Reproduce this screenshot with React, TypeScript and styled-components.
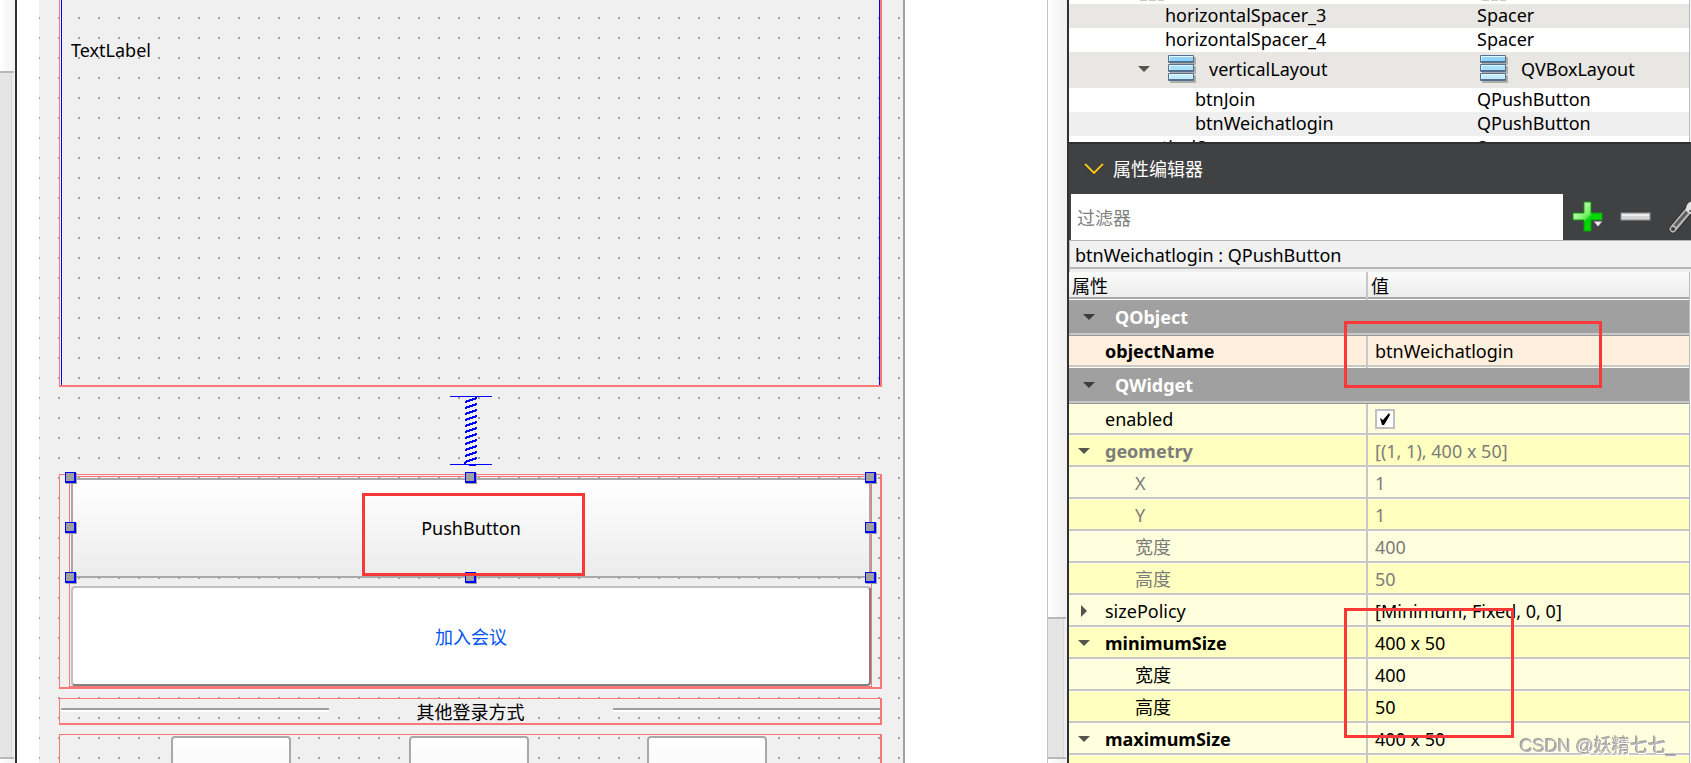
import React from 'react';
import styled, { createGlobalStyle, css } from 'styled-components';

const GlobalStyle = createGlobalStyle`
  * { box-sizing: border-box; }
  body {
    margin: 0;
    background: #ffffff;
    color: #000000;
    font: 18px/24px 'Noto Sans', 'Noto Sans CJK SC', sans-serif;
  }
  button, input { font: inherit; color: inherit; }
`;

const frameRed = '#f87878';
const markRed = '#fb3838';
const dark = '#2f3032';
const dockGrey = '#404142';

const Workspace = styled.div`
  display: flex;
  height: 100vh;
  overflow: hidden;
`;

/* ---------- scroll bars ---------- */

const ScrollTrack = styled.div<{ $width: number; $edge?: boolean }>`
  display: flex;
  flex-direction: column;
  flex: none;
  width: ${(p) => p.$width}px;
  border-left: ${(p) => (p.$edge ? '1px solid #c4c4c4' : '0')};
  background: linear-gradient(to right, #ffffff, #f0f0f0);
`;

const ScrollSpace = styled.div<{ $grow: number }>`
  flex: ${(p) => p.$grow} 1 0;
`;

const ScrollHandle = styled.div<{ $grow: number }>`
  flex: ${(p) => p.$grow} 1 0;
  margin-right: 1px;
  border: solid #b8b8b8;
  border-width: 2px 0;
  background: #e5e5e5;
  box-shadow: inset -2px 0 #ececec, inset -3px 0 #d8d8d8;
`;

const ScrollEnd = styled.div`
  flex: none;
  height: 4px;
`;

/* ---------- form canvas ---------- */

const Canvas = styled.main`
  display: flex;
  flex: 1;
  min-width: 0;
  padding: 0 142px 0 22px;
  border-left: 2px solid ${dark};
`;

const Form = styled.form`
  display: flex;
  flex: 1;
  flex-direction: column;
  gap: 9px;
  min-width: 0;
  padding: 0 21px 0 20px;
  overflow: hidden;
  border-right: 2px solid #a0a0a0;
  background: conic-gradient(at 2px 2px, transparent 75%, #a0a0a0 0) -1px -3px / 20px 20px #f0f0f0;
`;

const LayoutFrame = styled.div`
  flex: none;
  border: solid ${frameRed};
  border-width: 1px 2px 2px 1px;
`;

const LabelFrame = styled(LayoutFrame)`
  height: 387px;
  padding-left: 1px;
  border-top: 0;
`;

const Label = styled.div`
  height: 100%;
  padding: 38px 9px;
  border: solid #0000ff;
  border-width: 0 1px;
`;

const SpacerDrawing = styled.svg`
  flex: none;
  align-self: center;
  overflow: visible;
`;

const ButtonsFrame = styled(LayoutFrame)`
  padding: 1px 8px 0 9px;
`;

const InnerFrame = styled.div`
  display: flex;
  flex-direction: column;
  gap: 8px;
  padding: 1px 0 0 1px;
  border: 1px solid ${frameRed};
`;

const Selection = styled.div`
  position: relative;
  display: grid;
  height: 100px;
`;

const PushButton = styled.button`
  padding: 0;
  border: 2px solid #a8a8a8;
  border-radius: 4px;
  background: linear-gradient(#ffffff, #ececec);
`;

const JoinButton = styled.button`
  height: 100px;
  padding: 2px 0 0;
  border: 2px solid;
  border-color: #c0c0c0 #808080 #808080 #c0c0c0;
  border-radius: 4px;
  background: #ffffff;
  color: #0055ee;
`;

const Handle = styled.span<{ $x: number; $y: number }>`
  position: absolute;
  left: calc(${(p) => p.$x}% - 6px);
  top: calc(${(p) => p.$y}% - 6px);
  width: 11px;
  height: 11px;
  border: solid #0000ff;
  border-width: 1px 2px 2px 1px;
  background: #a0a0a0;
  box-shadow: 1px 1px #a0a0a0;
`;

const mark = css`
  position: absolute;
  border: 3px solid ${markRed};
  pointer-events: none;
`;

const ButtonMark = styled.span`
  ${mark}
  left: calc(50% - 109px);
  top: 15px;
  width: 223px;
  height: 83px;
`;

const DividerFrame = styled(LayoutFrame)`
  display: grid;
  grid-template-columns: 1fr 284px 1fr;
  padding-left: 1px;
  text-align: center;
`;

const Rule = styled.hr`
  width: 100%;
  height: 4px;
  margin: 9px 0 0;
  border: solid;
  border-width: 2px 0;
  border-color: #a0a0a0 transparent #ffffff;
`;

const DividerText = styled.span`
  height: 24px;
  line-height: 26px;
`;

const IconButtonsFrame = styled(LayoutFrame)`
  display: flex;
  justify-content: center;
  gap: 118px;
  padding: 1px 2px 0 0;
`;

const IconButton = styled(PushButton)`
  width: 120px;
  height: 100px;
`;

/* ---------- dock ---------- */

const Dock = styled.aside`
  display: flex;
  flex: none;
  flex-direction: column;
  width: 624px;
  border-left: 2px solid ${dark};
`;

const Scrolled = styled.div<{ $height?: number }>`
  position: relative;
  flex: ${(p) => (p.$height ? 'none' : '1')};
  height: ${(p) => (p.$height ? `${p.$height}px` : 'auto')};
  min-height: 0;
  overflow: hidden;
  border-right: 1px solid #f4f4f4;
  box-shadow: inset -1px 0 #bdbdbd;
`;

const ObjectTable = styled.table`
  width: calc(100% - 1px);
  table-layout: fixed;
  border-collapse: collapse;
`;

const ObjectRow = styled.tr<{ $tone: string; $height: number }>`
  height: ${(p) => p.$height}px;
  background: ${(p) => p.$tone};
`;

const ObjectCell = styled.td<{ $indent: number }>`
  padding: 0 0 0 ${(p) => p.$indent}px;
  line-height: 22px;
  white-space: nowrap;
  vertical-align: top;
`;

const IconTail = styled.div`
  width: 24px;
  height: 1px;
  background: repeating-linear-gradient(to right, #c8c8c8 0 7px, #ffffff 7px 9px);
`;

const Branch = styled.div<{ $gap: number }>`
  display: flex;
  align-items: center;
  gap: ${(p) => p.$gap}px;
`;

const LayoutBranch = styled(Branch)`
  height: 34px;
`;

const Disclosure = styled.button`
  display: grid;
  place-items: center;
  width: 16px;
  height: 16px;
  padding: 0;
  border: 0;
  background: none;
`;

const DockTitle = styled.h2`
  display: flex;
  flex: none;
  align-items: center;
  gap: 9px;
  height: 52px;
  margin: 0;
  padding-left: 15px;
  border-top: 2px solid ${dark};
  background: ${dockGrey};
  color: #ffffff;
  font-size: 18px;
  font-weight: 400;
`;

const FilterBar = styled.div`
  display: flex;
  flex: none;
  height: 46px;
  padding-left: 2px;
  overflow: hidden;
  background: ${dockGrey};
`;

const FilterInput = styled.input`
  flex: 1;
  min-width: 0;
  padding: 1px 6px 0;
  border: 0;
  border-radius: 0;
  background: #ffffff;
  &::placeholder { color: #808080; opacity: 1; }
`;

const Tools = styled.div`
  display: flex;
  flex: none;
  gap: 16px;
  width: 128px;
  padding: 6px 0 0 9px;
  overflow: hidden;
`;

const ToolButton = styled.button`
  display: grid;
  flex: none;
  place-items: center;
  width: 32px;
  height: 32px;
  padding: 0;
  border: 0;
  background: none;
`;

const ObjectTitle = styled.div`
  flex: none;
  height: 32px;
  padding: 2px 5px 0;
  border: solid #b4b4b4;
  border-width: 1px 0 0 1px;
  background: linear-gradient(to top, #f0f0f0 3px, #b8b8b8 3px 5px, #f1f1f1 5px);
`;

const PropertyTable = styled.table`
  width: calc(100% - 1px);
  table-layout: fixed;
  border-collapse: separate;
  border-spacing: 0;
`;

const HeadCell = styled.th`
  height: 28px;
  padding: 0 3px 1px;
  background: linear-gradient(to top, #ffffff 1px, #a8a8a8 1px 3px, #ececec 3px, #fbfbfb);
  font-weight: 400;
  text-align: left;
  &:first-child { border-right: 2px solid #c8c8c8; }
`;

const GroupCell = styled.th`
  height: 36px;
  padding: 0 0 3px 12px;
  background: linear-gradient(to top, #989898 1px, #c8c8c8 1px 3px, #a0a0a0 3px);
  color: #ffffff;
  font-weight: 700;
  text-align: left;
`;

type Shade = 'peach' | 'pale' | 'deep';
const shades: Record<Shade, string> = { peach: '#fff0de', pale: '#ffffdd', deep: '#ffffbf' };

const PropertyRow = styled.tr<{ $shade: Shade; $muted?: boolean }>`
  color: ${(p) => (p.$muted ? '#7c7c7c' : '#000000')};
  background: linear-gradient(to top, #ffffee 1px, #c8c8c8 1px 3px, ${(p) => shades[p.$shade]} 3px);
`;

const NameCell = styled.th<{ $bold?: boolean; $indent: number }>`
  height: 32px;
  padding: 0 0 3px ${(p) => p.$indent}px;
  border-right: 2px solid #c8c8c8;
  font-weight: ${(p) => (p.$bold ? 700 : 400)};
  text-align: left;
  white-space: nowrap;
`;

const ValueCell = styled.td`
  padding: 0 0 3px 7px;
  white-space: nowrap;
`;

const CheckBox = styled.label`
  display: grid;
  width: 20px;
  height: 20px;
  > * { grid-area: 1 / 1; margin: 0; }
  > svg { pointer-events: none; }
`;

const CheckInput = styled.input`
  appearance: none;
  width: 20px;
  height: 20px;
  border: 2px solid #c0c0c0;
  background: #ffffff;
`;

const NameMark = styled.div`
  ${mark}
  left: 275px;
  top: 49px;
  width: 258px;
  height: 67px;
`;

const SizeMark = styled.div`
  ${mark}
  left: 275px;
  top: 336px;
  width: 170px;
  height: 130px;
`;

const Watermark = styled.div`
  position: fixed;
  right: 15px;
  bottom: 5px;
  color: #b4b4b0;
  font: 18px/24px 'Liberation Sans', 'Noto Sans CJK SC', sans-serif;
  text-shadow: 1px 1px #ffffff, -1px -1px #9c9c94;
`;

/* ---------- drawings ---------- */

const DownArrow = ({ fill = '#55554d' }: { fill?: string }) => (
  <svg width="12" height="6" viewBox="0 0 12 6" aria-hidden="true">
    <path d="M0 0H12L6 6Z" fill={fill} />
  </svg>
);

const RightArrow = () => (
  <svg width="6" height="12" viewBox="0 0 6 12" aria-hidden="true">
    <path d="M0 0V12L6 6Z" fill="#55554d" />
  </svg>
);

const LayoutIcon = () => (
  <svg width="28" height="28" viewBox="0 0 28 28" aria-hidden="true">
    {['#8fd4f8', '#a8e0fb', '#c4ecff'].map((tone, i) => (
      <g key={tone} transform={`translate(0 ${i * 9})`}>
        <rect x="2" y="2" width="26" height="8" rx="1" fill="#000000" opacity="0.25" />
        <rect x="0" y="0" width="26" height="8" rx="1" fill="#55718f" />
        <rect x="1" y="1" width="24" height="5" fill="#e6f8ff" />
        <rect x="2" y="2" width="23" height="4" fill={tone} />
      </g>
    ))}
  </svg>
);

const Chevron = () => (
  <svg width="20" height="14" viewBox="0 0 20 14" fill="none" aria-hidden="true">
    <path d="M1 3L10 12L19 3" stroke="#242424" strokeWidth="2" />
    <path d="M1 2L10 11L19 2" stroke="#efc321" strokeWidth="2" />
  </svg>
);

const PlusIcon = () => (
  <svg width="32" height="32" viewBox="0 0 32 32" aria-hidden="true">
    <defs>
      <linearGradient id="plus" x1="0" y1="0" x2="1" y2="1">
        <stop offset="0.2" stopColor="#c4fab8" />
        <stop offset="0.48" stopColor="#70ec60" />
        <stop offset="0.56" stopColor="#00d400" />
        <stop offset="1" stopColor="#10e010" />
      </linearGradient>
    </defs>
    <path d="M12 2H19V13H30V20H19V31H12V20H1V13H12Z" fill="url(#plus)" stroke="#0c9c0c" strokeWidth="1" />
    <path d="M21 21H31L26 27Z" fill="#e8e8e8" stroke="#484848" strokeWidth="1" />
  </svg>
);

const MinusIcon = () => (
  <svg width="32" height="32" viewBox="0 0 32 32" aria-hidden="true">
    <rect x="1" y="13" width="29" height="7" fill="#d4d4d4" stroke="#949494" />
    <rect x="2" y="14" width="27" height="2" fill="#eeeeee" />
  </svg>
);

const WrenchIcon = () => (
  <svg width="32" height="34" viewBox="0 0 32 34" aria-hidden="true">
    <path d="M5 29L20 11" stroke="#2c2c2c" strokeWidth="9" strokeLinecap="round" />
    <path d="M5 29L20 11" stroke="#b8b8b8" strokeWidth="7" strokeLinecap="round" />
    <path d="M7 26L19 12" stroke="#5c5c5c" strokeWidth="3" />
    <circle cx="5" cy="29" r="2" fill="#404142" />
    <path d="M18 10C18 5 20 2 25 1L32 1V16L24 15Z" fill="#e4e4e4" />
    <circle cx="22" cy="11" r="1" fill="#505050" />
  </svg>
);

const zigzag = Array.from({ length: 11 }, (_, i) => `M15 ${6 + i * 6}L27 ${2 + i * 6}`).join('');

const VerticalSpacer = () => (
  <SpacerDrawing width="42" height="69" viewBox="0 0 42 69" aria-hidden="true">
    <g stroke="#0000ff" shapeRendering="crispEdges" fill="none">
      <path d="M0 0.5H42M0 68.5H42" />
      <path d={zigzag} strokeWidth="2" />
      <path d="M15 66V68M19 69H26" strokeWidth="2" />
    </g>
  </SpacerDrawing>
);

/* ---------- data ---------- */

const handles = [[0, 0], [50, 0], [100, 0], [0, 50], [100, 50], [0, 100], [50, 100], [100, 100]];

interface Property {
  name: string;
  value: string;
  shade: Shade;
  bold?: boolean;
  muted?: boolean;
  child?: boolean;
  open?: boolean;
}

const widgetProperties: Property[] = [
  { name: 'geometry', value: '[(1, 1), 400 x 50]', shade: 'deep', bold: true, muted: true, open: true },
  { name: 'X', value: '1', shade: 'pale', muted: true, child: true },
  { name: 'Y', value: '1', shade: 'deep', muted: true, child: true },
  { name: '宽度', value: '400', shade: 'pale', muted: true, child: true },
  { name: '高度', value: '50', shade: 'deep', muted: true, child: true },
  { name: 'sizePolicy', value: '[Minimum, Fixed, 0, 0]', shade: 'pale', open: false },
  { name: 'minimumSize', value: '400 x 50', shade: 'deep', bold: true, open: true },
  { name: '宽度', value: '400', shade: 'pale', child: true },
  { name: '高度', value: '50', shade: 'deep', child: true },
  { name: 'maximumSize', value: '400 x 50', shade: 'pale', bold: true, open: true },
  { name: '', value: '', shade: 'deep', child: true },
];

const PropertyLine = ({ item }: { item: Property }) => {
  const branch = item.open !== undefined;
  return (
    <PropertyRow $shade={item.shade} $muted={item.muted}>
      <NameCell scope="row" $bold={item.bold} $indent={branch ? 7 : item.child ? 66 : 36}>
        {branch ? (
          <Branch $gap={13}>
            <Disclosure type="button" aria-label={item.name} aria-expanded={item.open}>
              {item.open ? <DownArrow /> : <RightArrow />}
            </Disclosure>
            {item.name}
          </Branch>
        ) : (
          item.name
        )}
      </NameCell>
      <ValueCell>{item.value}</ValueCell>
    </PropertyRow>
  );
};

const GroupLine = ({ name }: { name: string }) => (
  <tr>
    <GroupCell colSpan={2}>
      <Branch $gap={18}>
        <Disclosure type="button" aria-label={name} aria-expanded>
          <DownArrow fill="#3c3c3c" />
        </Disclosure>
        {name}
      </Branch>
    </GroupCell>
  </tr>
);

export default function App() {
  return (
    <>
      <GlobalStyle />
      <Workspace>
        <ScrollTrack $width={15}>
          <ScrollSpace $grow={71} />
          <ScrollHandle $grow={684} />
          <ScrollEnd />
        </ScrollTrack>

        <Canvas>
          <Form>
            <LabelFrame>
              <Label>TextLabel</Label>
            </LabelFrame>
            <VerticalSpacer />
            <ButtonsFrame>
              <InnerFrame>
                <Selection>
                  <PushButton type="button">PushButton</PushButton>
                  {handles.map(([x, y]) => (
                    <Handle key={`${x}-${y}`} $x={x} $y={y} />
                  ))}
                  <ButtonMark />
                </Selection>
                <JoinButton type="button">加入会议</JoinButton>
              </InnerFrame>
            </ButtonsFrame>
            <DividerFrame>
              <Rule />
              <DividerText>其他登录方式</DividerText>
              <Rule />
            </DividerFrame>
            <IconButtonsFrame>
              <IconButton type="button" aria-label="1" />
              <IconButton type="button" aria-label="2" />
              <IconButton type="button" aria-label="3" />
            </IconButtonsFrame>
          </Form>
        </Canvas>

        <ScrollTrack $width={20} $edge>
          <ScrollSpace $grow={617} />
          <ScrollHandle $grow={138} />
          <ScrollEnd />
        </ScrollTrack>

        <Dock>
          <Scrolled $height={142}>
            <ObjectTable>
              <colgroup>
                <col width="404" />
                <col />
              </colgroup>
              <tbody>
                <ObjectRow $tone="#ffffff" $height={4}>
                  <ObjectCell $indent={71}><IconTail /></ObjectCell>
                  <ObjectCell $indent={9}><IconTail /></ObjectCell>
                </ObjectRow>
                <ObjectRow $tone="#e8e7e3" $height={24}>
                  <ObjectCell $indent={96}>horizontalSpacer_3</ObjectCell>
                  <ObjectCell $indent={4}>Spacer</ObjectCell>
                </ObjectRow>
                <ObjectRow $tone="#ffffff" $height={24}>
                  <ObjectCell $indent={96}>horizontalSpacer_4</ObjectCell>
                  <ObjectCell $indent={4}>Spacer</ObjectCell>
                </ObjectRow>
                <ObjectRow $tone="#e8e7e3" $height={36}>
                  <ObjectCell $indent={67}>
                    <LayoutBranch $gap={16}>
                      <Disclosure type="button" aria-label="verticalLayout" aria-expanded>
                        <DownArrow />
                      </Disclosure>
                      <Branch $gap={13}>
                        <LayoutIcon />
                        verticalLayout
                      </Branch>
                    </LayoutBranch>
                  </ObjectCell>
                  <ObjectCell $indent={7}>
                    <LayoutBranch $gap={13}>
                      <LayoutIcon />
                      QVBoxLayout
                    </LayoutBranch>
                  </ObjectCell>
                </ObjectRow>
                <ObjectRow $tone="#ffffff" $height={24}>
                  <ObjectCell $indent={126}>btnJoin</ObjectCell>
                  <ObjectCell $indent={4}>QPushButton</ObjectCell>
                </ObjectRow>
                <ObjectRow $tone="#efefef" $height={24}>
                  <ObjectCell $indent={126}>btnWeichatlogin</ObjectCell>
                  <ObjectCell $indent={4}>QPushButton</ObjectCell>
                </ObjectRow>
                <ObjectRow $tone="#ffffff" $height={24}>
                  <ObjectCell $indent={66}>verticalSpacer</ObjectCell>
                  <ObjectCell $indent={4}>Spacer</ObjectCell>
                </ObjectRow>
              </tbody>
            </ObjectTable>
          </Scrolled>

          <DockTitle>
            <Chevron />
            属性编辑器
          </DockTitle>
          <FilterBar>
            <FilterInput type="text" placeholder="过滤器" aria-label="过滤器" />
            <Tools>
              <ToolButton type="button" aria-label="+"><PlusIcon /></ToolButton>
              <ToolButton type="button" aria-label="-"><MinusIcon /></ToolButton>
              <ToolButton type="button" aria-label="configure"><WrenchIcon /></ToolButton>
            </Tools>
          </FilterBar>
          <ObjectTitle>btnWeichatlogin : QPushButton</ObjectTitle>

          <Scrolled>
            <PropertyTable>
              <colgroup>
                <col width="299" />
                <col />
              </colgroup>
              <thead>
                <tr>
                  <HeadCell scope="col">属性</HeadCell>
                  <HeadCell scope="col">值</HeadCell>
                </tr>
              </thead>
              <tbody>
                <GroupLine name="QObject" />
                <PropertyLine item={{ name: 'objectName', value: 'btnWeichatlogin', shade: 'peach', bold: true }} />
                <GroupLine name="QWidget" />
                <PropertyRow $shade="pale">
                  <NameCell scope="row" $indent={36}>
                    <label htmlFor="enabled">enabled</label>
                  </NameCell>
                  <ValueCell>
                    <CheckBox>
                      <CheckInput id="enabled" type="checkbox" defaultChecked />
                      <svg width="20" height="20" viewBox="0 0 20 20" aria-hidden="true">
                        <path d="M5 9L8 11L14 4L15 6L9 16H7Z" fill="#000000" />
                      </svg>
                    </CheckBox>
                  </ValueCell>
                </PropertyRow>
                {widgetProperties.map((item, i) => (
                  <PropertyLine key={i} item={item} />
                ))}
              </tbody>
            </PropertyTable>
            <NameMark />
            <SizeMark />
          </Scrolled>
        </Dock>
      </Workspace>
      <Watermark>CSDN @妖精七七_</Watermark>
    </>
  );
}
